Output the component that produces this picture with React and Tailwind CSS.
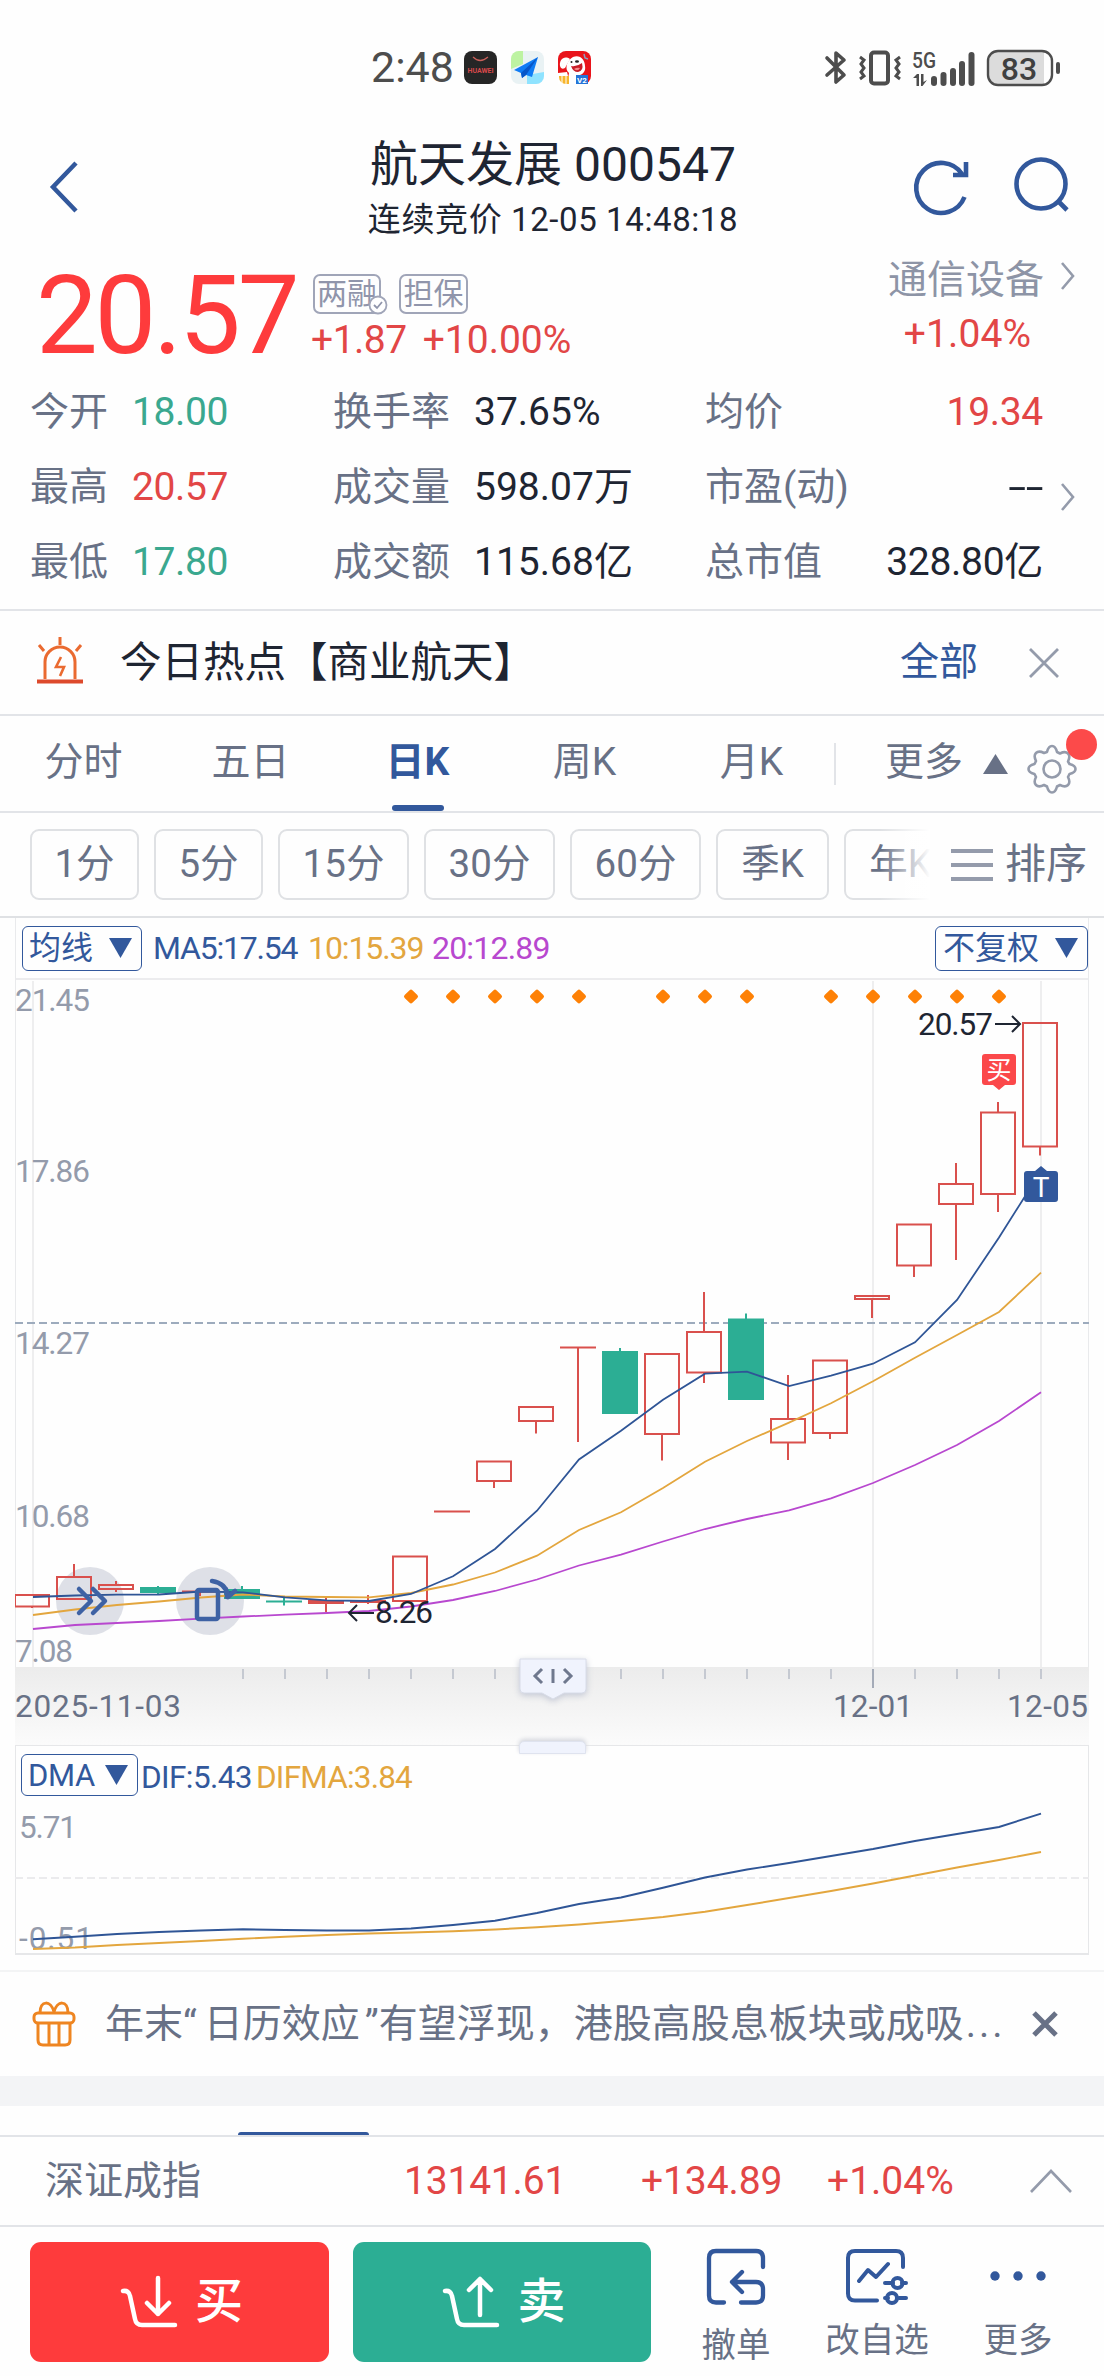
import React from 'react';

// x position of the n-th trading day on the chart
const dayX = (i) => 33 + i * 42;

// [high, body top, body bottom, low, direction], all in chart y units
const CANDLES = [
    [1595, 1595, 1606.5, 1608, 'up'],
    [1564, 1577, 1599, 1600, 'up'],
    [1581, 1585, 1589, 1592, 'up'],
    [1586, 1588, 1592, 1595, 'down'],
    [1591, 1591.5, 1591.5, 1596, 'up'],
    [1586, 1590, 1598, 1599, 'down'],
    [1598, 1601.5, 1601.5, 1605.5, 'down'],
    [1598, 1601, 1603, 1612, 'up'],
    [1595, 1601, 1602, 1604, 'up'],
    [1556.5, 1556.5, 1601, 1602, 'up'],
    [1511.5, 1511.5, 1511.5, 1511.5, 'up'],
    [1461.5, 1461.5, 1481, 1488, 'up'],
    [1407, 1407, 1421, 1433.5, 'up'],
    [1347.5, 1347.5, 1347.5, 1442, 'up'],
    [1348, 1352, 1413, 1414, 'down'],
    [1354, 1354, 1434, 1460.5, 'up'],
    [1292, 1332, 1372.5, 1383, 'up'],
    [1313.5, 1319.5, 1399, 1400, 'down'],
    [1375, 1419, 1442.5, 1460, 'up'],
    [1360.5, 1360.5, 1433, 1439, 'up'],
    [1296, 1296, 1299, 1318, 'up'],
    [1224.5, 1224.5, 1265.5, 1277, 'up'],
    [1163, 1184, 1204, 1260, 'up'],
    [1102, 1112.5, 1194, 1212, 'up'],
    [1023, 1023, 1146.5, 1155.5, 'up'],
];

const MA5 = [1597, 1595.5, 1594.7, 1594.5, 1591.5, 1592.3, 1597.3, 1600.3, 1601, 1594, 1576.3, 1549, 1510.7, 1459.5, 1430.7, 1399.7, 1373.7, 1371.7, 1386, 1375.7, 1363.7, 1342.3, 1300, 1237.5, 1171];
const MA10 = [1615, 1609.5, 1605, 1601.5, 1597.5, 1594.5, 1596.5, 1597, 1597.3, 1593, 1584.5, 1572.5, 1555.7, 1530, 1512.3, 1488, 1461.7, 1441, 1422.7, 1403.3, 1381.3, 1357.7, 1335, 1312, 1272.7];
const MA20 = [1629, 1625, 1623, 1621, 1618.7, 1616.5, 1614.7, 1613, 1611, 1606.5, 1600, 1591, 1579.5, 1565.5, 1554.7, 1541.5, 1529, 1519, 1510.3, 1498.3, 1483, 1465, 1445, 1421, 1392.3];
const DIF = [1939.3, 1936.7, 1934, 1932, 1930.5, 1929.3, 1930, 1930.5, 1930.5, 1928.5, 1925, 1920.7, 1913, 1904, 1897.5, 1887.7, 1877.5, 1869.5, 1863, 1856, 1849, 1841, 1834, 1827, 1813.7];
const DIFMA = [1949, 1947.5, 1945, 1943, 1941, 1938.7, 1936.7, 1935, 1933.5, 1932.5, 1931.3, 1929.5, 1927.3, 1924.5, 1921, 1917, 1911.7, 1905, 1898, 1891, 1883.5, 1875.5, 1867.5, 1860, 1852];

const EVENT_DAYS = [9, 10, 11, 12, 13, 15, 16, 17, 19, 20, 21, 22, 23];

const STATS = [
    ['今开', '18.00', 'text-[#3aa88f]', '换手率', '37.65%', '均价', '19.34', 'text-[#e24646]'],
    ['最高', '20.57', 'text-[#e24646]', '成交量', '598.07万', '市盈(动)', '--', 'origin-right scale-x-[1.65] text-[#1e2532]'],
    ['最低', '17.80', 'text-[#3aa88f]', '成交额', '115.68亿', '总市值', '328.80亿', 'text-[#1e2532]'],
];

const TABS = ['分时', '五日', '日K', '周K', '月K'];

const PERIODS = [
    ['1分', 'w-[109px]'],
    ['5分', 'w-[109px]'],
    ['15分', 'w-[131px]'],
    ['30分', 'w-[131px]'],
    ['60分', 'w-[131px]'],
    ['季K', 'w-[113px]'],
    ['年K', 'w-[113px]'],
];

const linePoints = (values) => values.map((y, i) => `${dayX(i)},${y}`).join(' ');

const StatusBar = () => (
    <div className="flex h-[135px] items-center pl-[371px] text-[#4d4d4d]">
        <span className="w-[93px] text-[43px] leading-none">2:48</span>
        <div className="flex gap-[14px]">
            <svg width="33" height="33" viewBox="0 0 33 33">
                <rect width="33" height="33" rx="8" fill="#262626" />
                <path d="M9 6q7 7 15 0" fill="none" stroke="#c9605a" strokeWidth="1.2" />
                <text x="16.500" y="21.500" fontSize="7" fontWeight="700" textAnchor="middle" textLength="26" fill="#d8484a">HUAWEI</text>
            </svg>
            <svg width="33" height="33" viewBox="0 0 33 33">
                <rect width="33" height="33" rx="8" fill="#e9f2f4" />
                <path d="M8 0h4v13L0 18V8a8 8 0 0 1 8-8z" fill="#bdf3a2" />
                <path d="M16 24l17-3v4a8 8 0 0 1-8 8h-9z" fill="#8fe3ff" />
                <path d="M27 6L3 19l7 3 1 5 4-3 6 2z" fill="#0f7cf5" />
                <path d="M27 6L10 22l1 5 4-3z" fill="#0756c8" />
            </svg>
            <svg width="33" height="33" viewBox="0 0 33 33">
                <rect width="33" height="33" rx="8" fill="#e9141b" />
                <path d="M11 22C6 18 9 9 15 6c7-3 12 3 12 9 1 5-2 8-5 9l3 9H9z" fill="#fff" />
                <path d="M12 8C6 4 1 9 2 15q1 4 5 2z" fill="#fff" />
                <path d="M0 22l9-1 3 12H0z" fill="#fff" />
                <path d="M13 15q6 1 11-3 2 8-4 9-5 0-7-6z" fill="#c81d28" />
                <path d="M16 18q3-2 6-1-2 4-6 1z" fill="#f58a8a" />
                <circle cx="13.500" cy="11" r="1" fill="#222" />
                <ellipse cx="19" cy="10.500" rx="2" ry="1.300" fill="#222" />
                <path d="M26 3l1 4 3 1" fill="none" stroke="#8d9fc0" strokeWidth="1.500" />
                <path d="M1 25h10v8H8a7 7 0 0 1-7-7z" fill="#f7b52c" />
                <path d="M4 25v7M8 25v8" stroke="#fff" strokeWidth="1" />
                <rect x="18" y="24" width="12" height="9" fill="#2474d8" />
                <text x="24" y="31.500" fontSize="8" fontWeight="700" textAnchor="middle" fill="#fff">V2</text>
            </svg>
        </div>
        <div className="ml-[233px] flex items-center">
            <svg width="24" height="36" viewBox="0 0 24 36" fill="none" stroke="#4d4d4d" strokeWidth="3.600" strokeLinejoin="round" strokeLinecap="round">
                <path d="M3 8L20 25l-8 7V3l8 7L3 25" />
            </svg>
            <svg className="ml-[10px]" width="44" height="36" viewBox="0 0 44 36" fill="none" stroke="#4d4d4d">
                <rect x="13" y="2.500" width="17" height="31" rx="3" strokeWidth="4" />
                <path d="M2 7l4 3-3 4 3 4-3 4 3 4-4 3M42 7l-4 3 3 4-3 4 3 4-3 4 4 3" strokeWidth="3" />
            </svg>
            <svg className="ml-[10px]" width="64" height="38" viewBox="0 0 64 38" fill="#4d4d4d">
                <text x="0" y="19" fontSize="22" fontWeight="500" textLength="24" lengthAdjust="spacingAndGlyphs">5G</text>
                <path d="M0 30l5-5h2v12H4.500v-8H1zM9 25h2.500v8l3.500-2-4.500 6H9z" />
                <rect x="19" y="27" width="6" height="10" rx="3" />
                <rect x="28.500" y="23" width="6" height="14" rx="3" />
                <rect x="38" y="19" width="6" height="18" rx="3" />
                <rect x="47" y="12" width="6" height="25" rx="3" />
                <rect x="56.500" y="3" width="6" height="34" rx="3" />
            </svg>
            <svg className="ml-[10px]" width="74" height="38" viewBox="0 0 74 38">
                <path d="M12 2.500h46v33H12a9 9 0 0 1-9-9v-15a9 9 0 0 1 9-9z" fill="#dcdcdc" />
                <rect x="2" y="2" width="64" height="34" rx="10" fill="none" stroke="#4d4d4d" strokeWidth="2.400" />
                <rect x="70" y="13" width="4" height="12" rx="2" fill="#4d4d4d" />
                <text x="33" y="30.500" fontSize="32" fontWeight="500" textAnchor="middle" fill="#404040">83</text>
            </svg>
        </div>
    </div>
);

const Header = () => (
    <div className="flex h-[117px] items-start">
        <svg className="mt-[24px] ml-[48px]" width="34" height="56" viewBox="0 0 34 56" fill="none" stroke="#32589c" strokeWidth="4.500">
            <path d="M28 4L5 28l23 24" />
        </svg>
        <div className="ml-[285px] flex w-[372px] flex-col items-center text-[#1e2532]">
            <h1 className="mt-[6px] text-[48px] leading-none font-normal whitespace-nowrap">航天发展 000547</h1>
            <p className="mt-[14px] text-[33px] leading-none tracking-[0.600px] whitespace-nowrap">连续竞价 12-05 14:48:18</p>
        </div>
        <svg className="mt-[20px] ml-[169px]" width="64" height="64" viewBox="0 0 64 64" fill="none" stroke="#32589c" strokeWidth="4.600">
            <path d="M56.500 42A25 25 0 1 1 54 19" />
            <path d="M58 7v13H45" strokeLinejoin="miter" />
        </svg>
        <svg className="mt-[16px] ml-[38px]" width="64" height="64" viewBox="0 0 64 64" fill="none" stroke="#32589c" strokeWidth="4.600">
            <circle cx="31" cy="33" r="24.500" />
            <path d="M48 50l9 9" />
        </svg>
    </div>
);

const RightArrow = ({ className }) => (
    <svg className={className} width="16" height="30" viewBox="0 0 16 30" fill="none" stroke="#949bab" strokeWidth="2.600">
        <path d="M2 2l11 13L2 28" />
    </svg>
);

const Quote = () => (
    <div className="h-[357px]">
        <div className="flex h-[122px]">
            <div className="mt-[9px] w-[277px] pl-[36px] text-[110px] leading-none tracking-[-3.200px] text-[#fe3b3c]">20.57</div>
            <div className="ml-[36px] flex flex-col">
                <div className="mt-[22px] flex h-[40px] gap-[18px] text-[30px] leading-none text-[#9095ab]">
                    <span className="relative flex w-[68px] items-center justify-center rounded-[7px] border-2 border-[#a0a5b8]">
                        两融
                        <svg className="absolute -right-[9px] -bottom-[3px]" width="20" height="20" viewBox="0 0 20 20">
                            <circle cx="10" cy="10" r="8.500" fill="#fff" stroke="#a0a5b8" strokeWidth="1.800" />
                            <path d="M6 10l3 3 5-6" fill="none" stroke="#9095ab" strokeWidth="1.800" />
                        </svg>
                    </span>
                    <span className="flex w-[69px] items-center justify-center rounded-[7px] border-2 border-[#a0a5b8]">担保</span>
                </div>
                <div className="mt-[7px] -ml-[2px] flex gap-[16px] text-[39px] leading-none whitespace-nowrap text-[#e24646]">
                    <span className="tracking-[-0.500px]">+1.87</span>
                    <span>+10.00%</span>
                </div>
            </div>
            <div className="ml-auto flex w-[154px] flex-col items-center leading-none">
                <span className="mt-[9px] text-[39px] whitespace-nowrap text-[#8d94a6]">通信设备</span>
                <span className="mt-[15px] ml-[3px] text-[39px] tracking-[0.100px] text-[#e24646]">+1.04%</span>
            </div>
            <RightArrow className="mt-[9px] mr-[28px] ml-[17px]" />
        </div>
        <div className="pt-px">
            {STATS.map(([a, av, ac, b, bv, c, cv, cc], i) => (
                <div key={a} className="flex h-[75px] items-center text-[39px] leading-none whitespace-nowrap text-[#687186]">
                    <span className="ml-[30px] w-[102px]">{a}</span>
                    <span className={`w-[201px] tracking-[-0.400px] ${ac}`}>{av}</span>
                    <span className="w-[141px]">{b}</span>
                    <span className="w-[231px] text-[#1e2532]">{bv}</span>
                    <span>{c}</span>
                    <span className={`ml-auto text-right tracking-[-0.300px] ${cc}`}>{cv}</span>
                    <span className="w-[61px] pl-[17px]">{i === 1 && <RightArrow className="mt-[18px]" />}</span>
                </div>
            ))}
        </div>
    </div>
);

const HotTopic = () => (
    <div className="flex h-[107px] items-center border-y-2 border-[#e2e4e8] text-[39px] leading-none">
        <svg className="-mt-[4px] ml-[36px]" width="48" height="50" viewBox="0 0 48 50" fill="none" stroke="#ea6a30" strokeWidth="3">
            <path d="M9 43V26a15 15 0 0 1 30 0v17" />
            <path d="M1 45.500h46" stroke="#dd4a2c" strokeWidth="4" />
            <path d="M24 1v8M3 9l5 6M45 9l-5 6" />
            <path d="M25 21l-5 10h8l-4 9" strokeWidth="2.600" />
        </svg>
        <span className="ml-[36px] text-[41.500px] text-[#1e2532]">今日热点【商业航天】</span>
        <span className="ml-auto text-[#32589c]">全部</span>
        <svg className="mr-[44px] ml-[50px]" width="32" height="32" viewBox="0 0 32 32" stroke="#949bab" strokeWidth="2.800">
            <path d="M2 2l28 28M30 2L2 30" />
        </svg>
    </div>
);

const KTabs = () => (
    <div className="flex h-[97px] border-b-2 border-[#e2e4e8] text-[39px] leading-none text-[#687186]">
        {TABS.map((tab) => (
            <div key={tab} className={`flex w-[167px] flex-col items-center ${tab === '日K' ? 'font-bold text-[#32589c]' : ''}`}>
                <span className="mt-[27px]">{tab}</span>
                {tab === '日K' && <span className="mt-auto h-[6px] w-[52px] rounded-[3px] bg-[#32589c]" />}
            </div>
        ))}
        <span className="mt-[27px] h-[42px] w-[2px] -translate-x-px bg-[#e2e4e8]" />
        <span className="mt-[27px] ml-[48px]">更多</span>
        <svg className="mt-[38px] ml-[20px]" width="25" height="20" viewBox="0 0 25 20" fill="#687186">
            <path d="M12.500 0L25 20H0z" />
        </svg>
        <div className="relative mt-[28px] ml-[19px] h-[50px] w-[50px]">
            <svg width="50" height="50" viewBox="0 0 50 50" fill="none" stroke="#949bab" strokeWidth="2.600" strokeLinejoin="round">
                <path d="M25 2c3 0 4 2 5 6l3 1.500c4-2 6-2 8 0s2 4 0 8l1.500 2.500c4 1 6 2 6 5s-2 4-6 5L41 33c2 4 2 6 0 8s-4 2-8 0l-3 1.500c-1 4-2 6-5 6s-4-2-5-6L17 41c-4 2-6 2-8 0s-2-4 0-8l-1.500-3c-4-1-6-2-6-5s2-4 6-5L9 17c-2-4-2-6 0-8s4-2 8 0l3-1c1-4 2-6 5-6z" />
                <circle cx="25" cy="25" r="8.500" />
            </svg>
            <span className="absolute -top-[15px] left-[39px] h-[31px] w-[31px] rounded-full bg-[#fc4a4a]" />
        </div>
    </div>
);

const PeriodChips = () => (
    <div className="flex h-[105px] items-center border-b-2 border-[#dfe1e4] text-[38.500px] leading-none text-[#687186]">
        <div className="relative ml-[30px] flex w-[900px] gap-[15px] overflow-hidden">
            {PERIODS.map(([label, width]) => (
                <span key={label} className={`flex h-[71px] shrink-0 items-center justify-center rounded-[9px] border-2 border-[#dfe1e4] ${width}`}>{label}</span>
            ))}
            <span className="absolute top-0 right-0 h-full w-[50px] bg-linear-to-r from-white/0 to-white" />
        </div>
        <svg className="ml-[21px]" width="42" height="34" viewBox="0 0 42 34" stroke="#949bab" strokeWidth="4">
            <path d="M0 3h42M0 17h42M0 31h42" />
        </svg>
        <span className="ml-[12px] text-[41px]">排序</span>
    </div>
);

const Dropdown = ({ label, className }) => (
    <span className={`flex items-center justify-between rounded-[6px] border-[1.500px] border-[#32589c] pr-[9px] text-[#32589c] ${className}`}>
        {label}
        <svg width="23" height="20" viewBox="0 0 23 20" fill="#32589c">
            <path d="M0 0h23L11.500 20z" />
        </svg>
    </span>
);

const Candle = ({ x, candle }) => {
    const [high, top, bottom, low, dir] = candle;
    const color = dir === 'up' ? '#d9504d' : '#2cae94';
    return (
        <g stroke={color} strokeWidth="2">
            {high < top && <line x1={x} x2={x} y1={high} y2={top} />}
            {low > bottom && <line x1={x} x2={x} y1={bottom} y2={low} />}
            {top === bottom ? (
                <line x1={x - 18} x2={x + 18} y1={top} y2={top} />
            ) : (
                <rect x={x - 17} y={top} width="34" height={bottom - top} fill={dir === 'up' ? 'none' : color} />
            )}
        </g>
    );
};

const KChart = () => (
    <div className="mx-[15px] border-x border-[#e9eaec]">
        <div className="flex h-[62px] items-center border-b-2 border-[#ececee] pl-[6px] text-[32px] leading-none whitespace-nowrap">
            <Dropdown label="均线" className="h-[45px] w-[120px] pl-[6px]" />
            <span className="ml-[11px] w-[155px] tracking-[-1.200px] text-[#32589c]">MA5:17.54</span>
            <span className="w-[124px] tracking-[-1.100px] text-[#e3a63e]">10:15.39</span>
            <span className="tracking-[-0.800px] text-[#b848cf]">20:12.89</span>
            <Dropdown label="不复权" className="ml-auto h-[45px] w-[153px] pl-[7px]" />
        </div>
        <svg className="-ml-px block" width="1074" height="765" viewBox="15 980 1074 765" fontSize="31.500">
            <defs>
                <linearGradient id="axisFade" x1="0" x2="0" y1="0" y2="1">
                    <stop offset="0" stopColor="#ececec" />
                    <stop offset="1" stopColor="#fbfbfb" />
                </linearGradient>
            </defs>
            <g stroke="#eeeeef" strokeWidth="2">
                <path d="M33 981V1667M873 981V1667M1041 981V1667" />
            </g>
            <path d="M15 1323H1089" stroke="#9dabbd" strokeWidth="2" strokeDasharray="8 4" />
            <g fill="#949bab">
                <text x="15" y="1011" textLength="75">21.45</text>
                <text x="15" y="1182" textLength="75">17.86</text>
                <text x="15" y="1354" textLength="75">14.27</text>
                <text x="15" y="1527" textLength="75">10.68</text>
                <text x="15" y="1662" textLength="58">7.08</text>
            </g>
            {EVENT_DAYS.map((i) => (
                <rect key={i} x={dayX(i) - 5.5} y={991} width="11" height="11" rx="2" fill="#fe8106" transform={`rotate(45 ${dayX(i)} 996.5)`} />
            ))}
            <g fill="#b9bccd" fillOpacity="0.45">
                <circle cx="90" cy="1601" r="34" />
                <circle cx="210" cy="1601" r="34" />
            </g>
            {CANDLES.map((candle, i) => (
                <Candle key={i} x={dayX(i) - 1} candle={candle} />
            ))}
            <g fill="none" strokeWidth="1.800">
                <polyline points={linePoints(MA20)} stroke="#b848cf" />
                <polyline points={linePoints(MA10)} stroke="#e3a63e" />
                <polyline points={linePoints(MA5)} stroke="#2f5596" />
            </g>
            <g fill="none" stroke="#3e62a4" strokeWidth="4.500" strokeLinecap="round" strokeLinejoin="round">
                <path d="M79 1589l12 12-12 12M93 1589l12 12-12 12" />
                <rect x="197" y="1590" width="21" height="29" rx="2" />
                <path d="M212 1581q14 2 16 15M227 1597l-1-8M228 1597l7-6" />
            </g>
            <g fill="#1e2532">
                <text x="918" y="1035" textLength="75">20.57</text>
                <text x="375" y="1623" textLength="58">8.26</text>
            </g>
            <g fill="none" stroke="#1e2532" strokeWidth="2">
                <path d="M995 1024h25M1012 1016l8 8-8 8" />
                <path d="M374 1613h-25M357 1605l-8 8 8 8" />
            </g>
            <path d="M985 1054h28q3 0 3 3v25q0 3-3 3h-8l-6 5-6-5h-8q-3 0-3-3v-25q0-3 3-3z" fill="#fb484a" />
            <text x="999" y="1079" fontSize="25" textAnchor="middle" fill="#fff">买</text>
            <path d="M1027 1171h8l6-5 6 5h8q3 0 3 3v25q0 3-3 3h-28q-3 0-3-3v-25q0-3 3-3z" fill="#32589c" />
            <text x="1041" y="1197" fontSize="28" textAnchor="middle" fill="#fff">T</text>
            <rect x="15" y="1667" width="1074" height="78" fill="url(#axisFade)" />
            {CANDLES.map((_, i) => (
                i >= 5 && <line key={i} x1={dayX(i)} x2={dayX(i)} y1="1669" y2={i === 20 ? 1688 : 1679} stroke={i === 20 ? '#a4abb8' : '#c5c9d1'} strokeWidth="2" />
            ))}
            <g fill="#687186">
                <text x="15" y="1717" textLength="166">2025-11-03</text>
                <text x="833" y="1717" textLength="80">12-01</text>
                <text x="1007" y="1717" textLength="81">12-05</text>
            </g>
            {/* splitter between price and indicator panels */}
            <g style={{ filter: 'drop-shadow(0 2px 3px #c3c7d4)' }}>
                <path d="M520 1659h66v30q0 4-4 4h-18l-11 6-11-6h-18q-4 0-4-4z" fill="#f0f3fd" stroke="#d8dce8" />
            </g>
            <path d="M542 1669l-7 7 7 7M564 1669l7 7-7 7M553 1669v14" fill="none" stroke="#6f788e" strokeWidth="3" />
        </svg>
    </div>
);

const DmaPanel = () => (
    <div className="mx-[15px] h-[210px] border border-b-2 border-[#e6e7e9]">
        <div className="relative flex h-[59px] items-start pl-[5px] text-[32px] leading-none whitespace-nowrap">
            <Dropdown label="DMA" className="mt-[8px] h-[42px] w-[117px] pl-[6px] text-[31px] tracking-[-0.300px]" />
            <span className="mt-[16px] ml-[3px] w-[115px] text-[31.500px] tracking-[-0.600px] text-[#32589c]">DIF:5.43</span>
            <span className="mt-[16px] text-[31.500px] tracking-[-0.800px] text-[#e3a63e]">DIFMA:3.84</span>
            <span className="absolute -top-[5px] left-[503px] h-[13px] w-[67px] rounded-t-[5px] border border-[#dfe3ef] bg-[#f0f3fd] shadow-[0_-2px_4px_#d4d6dd]" />
        </div>
        <svg className="-ml-px block overflow-visible" width="1074" height="147" viewBox="15 1805 1074 147" fontSize="31.500">
            <path d="M15 1878H1089" stroke="#ebebed" strokeWidth="2" strokeDasharray="8 4" />
            <g fill="#949bab">
                <text x="19" y="1838" textLength="58">5.71</text>
                <text x="19" y="1949" textLength="74">-0.51</text>
            </g>
            <g fill="none" strokeWidth="1.900">
                <polyline points={linePoints(DIFMA)} stroke="#e3a63e" />
                <polyline points={linePoints(DIF)} stroke="#2f5596" />
            </g>
        </svg>
    </div>
);

const NewsBar = () => (
    <div className="mt-[15px] flex h-[106px] items-center border-t-2 border-[#f3f4f5] text-[39px] leading-none text-[#687186]">
        <svg className="ml-[32px]" width="44" height="46" viewBox="0 0 44 46" fill="none" stroke="#ee8521" strokeWidth="3">
            <rect x="2" y="12" width="40" height="10" rx="4" />
            <path d="M6 22v17q0 5 5 5h22q5 0 5-5V22M17 23v21M27 23v21" />
            <path d="M8 12c0-13 11-13 14-1 3-12 14-12 14 1" />
        </svg>
        <span className="ml-[29px] whitespace-nowrap">
            年末<span className="mr-[7px]">“</span>日历效应<span className="ml-[5px]">”</span>有望浮现，港股高股息板块或成吸<span className="ml-[2px] tracking-[3px]">...</span>
        </span>
        <svg className="mr-[46px] ml-auto" width="26" height="26" viewBox="0 0 26 26" stroke="#687186" strokeWidth="5">
            <path d="M2 2l22 22M24 2L2 24" />
        </svg>
    </div>
);

const IndexRow = () => (
    <div className="flex h-[92px] items-center border-y-2 border-[#e2e4e8] text-[39px] leading-none whitespace-nowrap text-[#e24646]">
        <span className="ml-[45px] w-[359px] text-[#687186]">深证成指</span>
        <span className="w-[237px] tracking-[-0.200px]">13141.61</span>
        <span className="w-[186px] tracking-[-0.100px]">+134.89</span>
        <span>+1.04%</span>
        <svg className="mr-[31px] ml-auto" width="44" height="26" viewBox="0 0 44 26" fill="none" stroke="#949bab" strokeWidth="2.600">
            <path d="M2 24L22 3l20 21" />
        </svg>
    </div>
);

const TradeBar = () => (
    <div className="flex h-[149px] items-start text-[34.500px] leading-none whitespace-nowrap text-[#687186]">
        <button className="mt-[15px] ml-[30px] flex h-[120px] w-[299px] items-center justify-center gap-[17px] rounded-[11px] bg-[#fe3b3c] pl-[4px] text-[48px] font-medium text-white">
            <svg width="58" height="54" viewBox="0 0 58 54" fill="none" stroke="#fff" strokeWidth="4.500" strokeLinecap="round" strokeLinejoin="round">
                <path d="M3 16q6-1 7 5l5 23q1 6 7 6h33M38 3v36M27 28l11 11 11-11" />
            </svg>
            买
        </button>
        <button className="mt-[15px] ml-[24px] flex h-[120px] w-[298px] items-center justify-center gap-[17px] rounded-[11px] bg-[#2cae94] pl-[4px] text-[48px] font-medium text-white">
            <svg width="58" height="54" viewBox="0 0 58 54" fill="none" stroke="#fff" strokeWidth="4.500" strokeLinecap="round" strokeLinejoin="round">
                <path d="M3 16q6-1 7 5l5 23q1 6 7 6h33M38 40V4M27 15L38 4l11 11" />
            </svg>
            卖
        </button>
        <div className="ml-[50px] flex w-[70px] flex-col items-center">
            <svg className="mt-[21px]" width="60" height="58" viewBox="0 0 60 58" fill="none" stroke="#32589c" strokeWidth="4.300" strokeLinecap="round" strokeLinejoin="round">
                <path d="M18 54.500H10q-7 0-7-7V10q0-7 7-7h40q7 0 7 7v9" />
                <path d="M35 54.500h15q7 0 7-7V41q0-7-7-7H26M36 24L26 34l10 10" />
            </svg>
            <span className="mt-[22px]">撤单</span>
        </div>
        <div className="ml-[53px] flex w-[106px] flex-col items-center">
            <svg className="mt-[21px]" width="64" height="58" viewBox="0 0 64 58" fill="none" stroke="#32589c" strokeWidth="4" strokeLinecap="round" strokeLinejoin="round">
                <path d="M32 52.500H10q-7 0-7-7V10q0-7 7-7h41q7 0 7 7v9" />
                <path d="M14 33l9-11 8 7 12-13M40 35h8M57 35h4M40 50h3M54 50h7" />
                <circle cx="52.500" cy="35" r="5" />
                <circle cx="47" cy="50" r="5" />
            </svg>
            <span className="mt-[17px]">改自选</span>
        </div>
        <div className="ml-[53px] flex w-[70px] flex-col items-center">
            <svg className="mt-[43px]" width="58" height="12" viewBox="0 0 58 12" fill="#32589c">
                <circle cx="6" cy="6" r="4.700" />
                <circle cx="29" cy="6" r="4.700" />
                <circle cx="52" cy="6" r="4.700" />
            </svg>
            <span className="mt-[41px]">更多</span>
        </div>
    </div>
);

const App = () => {
    return (
        <div className="h-[2376px] w-[1104px] overflow-hidden bg-[#fefefe] font-['Roboto','Noto_Sans_CJK_SC',sans-serif]">
            <StatusBar />
            <Header />
            <Quote />
            <HotTopic />
            <KTabs />
            <PeriodChips />
            <KChart />
            <DmaPanel />
            <NewsBar />
            <div className="h-[30px] bg-[#f3f4f6]" />
            <div className="flex h-[29px] items-end pl-[238px]">
                <span className="h-[3px] w-[131px] rounded-t-[8px] bg-[#32589c]" />
            </div>
            <IndexRow />
            <TradeBar />
        </div>
    );
};

export default App;
